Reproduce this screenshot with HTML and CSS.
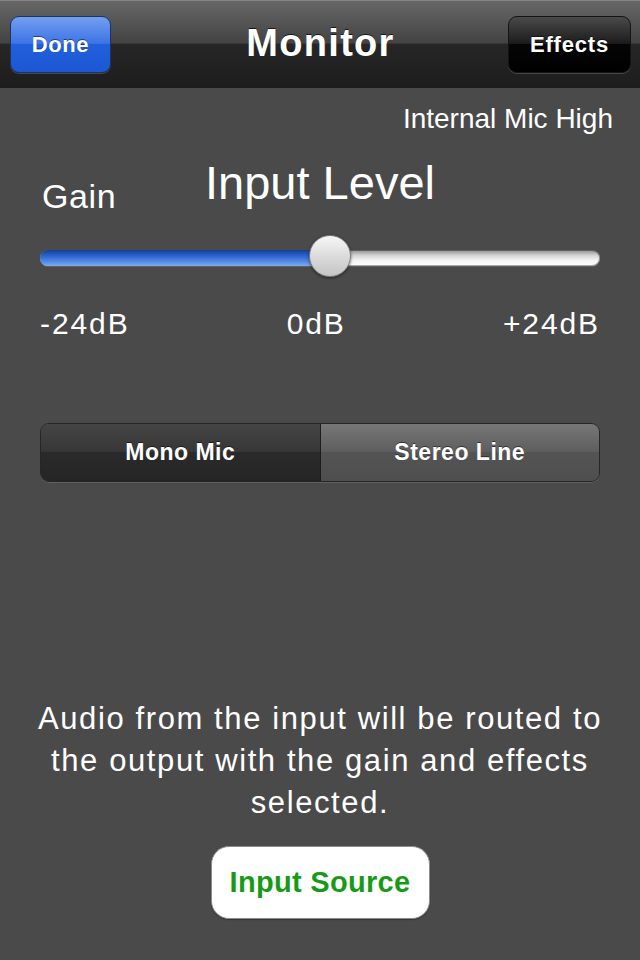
FILE: index.html
```html
<!DOCTYPE html>
<html>
  <head>
    <meta charset="utf-8">
    <title>Monitor</title>
    <link rel="stylesheet" href="styles.css">
  </head>
  <body>
    <header class="navbar">
      <button type="button" class="nav-btn btn-done">Done</button>
      <h1 class="nav-title">Monitor</h1>
      <button type="button" class="nav-btn btn-effects">Effects</button>
    </header>

    <main class="monitor">
      <p class="source-name">Internal Mic High</p>

      <div class="level-head">
        <span class="gain-label">Gain</span>
        <h2 class="level-title">Input Level</h2>
      </div>

      <div class="slider">
        <div class="slider-track">
          <div class="slider-fill" style="width: 51.8%"></div>
        </div>
        <div class="slider-thumb" style="left: 51.8%"></div>
      </div>

      <div class="slider-scale">
        <span>-24dB</span>
        <span>0dB</span>
        <span>+24dB</span>
      </div>

      <div class="segmented">
        <button type="button" class="segment selected">Mono Mic</button>
        <button type="button" class="segment">Stereo Line</button>
      </div>

      <p class="note">Audio from the input will be routed to the output with the gain and effects selected.</p>

      <button type="button" class="btn-source">Input Source</button>
    </main>
  </body>
</html>
```

FILE: styles.css
```css
html, body {
  margin: 0;
  padding: 0;
}

body {
  width: 640px;
  min-height: 960px;
  background: #4a4a4a;
  color: #fff;
  font-family: "Liberation Sans", Arial, sans-serif;
}

button {
  font-family: inherit;
  cursor: pointer;
}

/* top bar */
.navbar {
  height: 88px;
  box-sizing: border-box;
  display: grid;
  grid-template-columns: 1fr auto 1fr;
  align-items: center;
  padding: 0 9px 0 10px;
  background: linear-gradient(#676767 0%, #434343 48%, #262626 50%, #1d1d1d 100%);
  border-top: 1px solid #858585;
}

.nav-title {
  margin: -3px 0 0;
  font-size: 38px;
  font-weight: bold;
  letter-spacing: 1.3px;
  text-shadow: 0 -1px 0 rgba(0, 0, 0, 0.7);
}

.nav-btn {
  height: 57px;
  border-radius: 9px;
  color: #fff;
  font-size: 22px;
  font-weight: bold;
  text-shadow: 0 -1px 0 rgba(0, 0, 0, 0.5);
  box-shadow: 0 1px 0 rgba(255, 255, 255, 0.18);
}

.btn-done {
  justify-self: start;
  width: 101px;
  border: 1px solid #1c3464;
  background: linear-gradient(#739ff0 0%, #3c74e6 48%, #2160db 50%, #1c57d4 100%);
  letter-spacing: 0.6px;
}

.btn-effects {
  justify-self: end;
  width: 123px;
  border: 1px solid #141414;
  background: linear-gradient(#4a4a4a 0%, #1c1c1c 48%, #050505 50%, #000 100%);
  letter-spacing: 0.8px;
}

/* content */
.monitor {
  display: flex;
  flex-direction: column;
  padding: 0 40px;
}

.source-name {
  margin: 15px -13px 0 0;
  text-align: right;
  font-size: 28px;
  line-height: 32px;
}

.level-head {
  display: grid;
  grid-template-columns: 1fr auto 1fr;
  align-items: start;
  margin-top: 21px;
}

.gain-label {
  margin-top: 21px;
  margin-left: 2px;
  font-size: 34px;
  line-height: 38px;
  letter-spacing: 0.6px;
}

.level-title {
  margin: 0;
  font-size: 47px;
  font-weight: normal;
  line-height: 54px;
}

.slider {
  position: relative;
  height: 42px;
  margin-top: 20px;
  display: flex;
  align-items: center;
}

.slider-track {
  flex: 1;
  height: 16px;
  margin-top: 3px;
  border-radius: 8px;
  overflow: hidden;
  background: linear-gradient(#8e8e8e 0%, #d6d6d6 35%, #f4f4f4 65%, #fff 100%);
  box-shadow: 0 1px 0 rgba(255, 255, 255, 0.12), inset 0 0 0 1px rgba(0, 0, 0, 0.35);
}

.slider-fill {
  height: 100%;
  background: linear-gradient(#143f96 0%, #2f67cf 40%, #5288e2 70%, #7eabf0 100%);
}

.slider-thumb {
  position: absolute;
  top: 0;
  width: 40px;
  height: 40px;
  margin-left: -21px;
  border-radius: 50%;
  border: 1px solid #7c7c7c;
  background: linear-gradient(#f6f6f6 0%, #dcdcdc 50%, #c4c4c4 100%);
  box-shadow: 0 1px 3px rgba(0, 0, 0, 0.55);
}

.slider-scale {
  display: flex;
  justify-content: space-between;
  margin-top: 30px;
  font-size: 30px;
  line-height: 34px;
  letter-spacing: 1.9px;
}

.segmented {
  display: flex;
  height: 57px;
  margin-top: 82px;
  border: 1px solid #262626;
  border-radius: 9px;
  overflow: hidden;
  box-shadow: 0 1px 0 rgba(255, 255, 255, 0.12);
}

.segment {
  flex: 1;
  border: none;
  color: #fff;
  font-size: 23px;
  font-weight: bold;
  letter-spacing: 0.5px;
  text-shadow: 0 -1px 0 rgba(0, 0, 0, 0.5);
  background: linear-gradient(#777 0%, #5e5e5e 48%, #545454 50%, #4e4e4e 100%);
}

.segment.selected {
  background: linear-gradient(#454545 0%, #373737 48%, #2a2a2a 50%, #252525 100%);
  border-right: 1px solid #1c1c1c;
}

.note {
  margin: 216px -12px 0;
  text-align: center;
  font-size: 31px;
  line-height: 42px;
  letter-spacing: 1.6px;
}

.btn-source {
  align-self: center;
  width: 219px;
  height: 73px;
  margin-top: 22px;
  border: 1px solid #8c8c8c;
  border-radius: 18px;
  background: #fff;
  color: #179b17;
  font-size: 29px;
  font-weight: bold;
  letter-spacing: 0.3px;
  box-shadow: 0 1px 1px rgba(0, 0, 0, 0.3);
}
```
